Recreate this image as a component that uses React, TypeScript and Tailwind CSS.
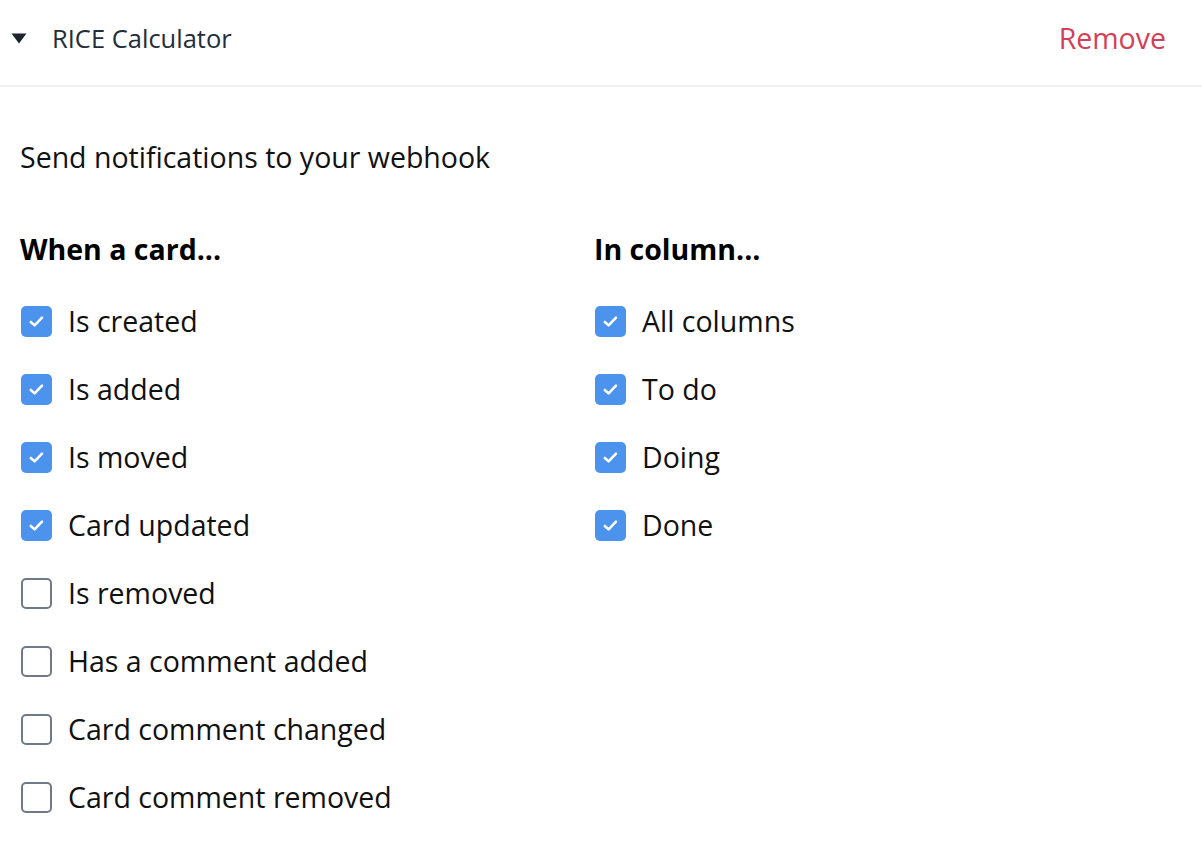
import React from "react";

const FONT = '"Open Sans", "Noto Sans", sans-serif';

function Box({ checked }: { checked: boolean }) {
  if (checked) {
    return (
      <span className="flex h-[31px] w-[31px] shrink-0 items-center justify-center rounded-[5px] bg-[#4b93ec]">
        <svg width="17" height="17" viewBox="0 0 17 17" fill="none">
          <path d="M2.8 9 L6.6 12.4 L14 4.6" stroke="white" strokeWidth="2.6" strokeLinecap="round" strokeLinejoin="round" />
        </svg>
      </span>
    );
  }
  return <span className="h-[31px] w-[31px] shrink-0 rounded-[5px] border-2 border-[#6f7a89] bg-white" />;
}

function Row({ label, checked }: { label: string; checked: boolean }) {
  return (
    <div className="flex h-[68px] items-center gap-[16px] pl-[1px]">
      <Box checked={checked} />
      <span className="text-[28.5px] leading-[40px] text-[#111]">{label}</span>
    </div>
  );
}

export default function App() {
  const left = ["Is created", "Is added", "Is moved", "Card updated", "Is removed", "Has a comment added", "Card comment changed", "Card comment removed"];
  const leftChecked = [true, true, true, true, false, false, false, false];
  const right = ["All columns", "To do", "Doing", "Done"];
  return (
    <div className="min-h-[862px] w-full bg-white" style={{ fontFamily: FONT }}>
      <div className="flex h-[87px] items-start justify-between border-b-2 border-[#f0f0f0] pl-[11px] pr-[36px] pt-[18px]">
        <div className="flex h-[40px] items-center gap-[25px]">
          <svg width="16" height="11" viewBox="0 0 16 11">
            <path d="M0.5 0.5 H15.5 L8 10.5 Z" fill="#1c2430" />
          </svg>
          <span className="text-[25.5px] leading-[40px] text-[#232d3b]">RICE Calculator</span>
        </div>
        <span className="text-[28.5px] leading-[40px] text-[#d33f55]">Remove</span>
      </div>
      <div className="pl-[20px]">
        <div className="pt-[50px] text-[28.5px] leading-[40px] text-[#111]">Send notifications to your webhook</div>
        <div className="mt-[52px] grid grid-cols-[574px_1fr]">
          <div>
            <div className="text-[28.5px] font-bold leading-[40px] text-black">When a card...</div>
            <div className="mt-[18px]">
              {left.map((l, i) => (
                <Row key={l} label={l} checked={leftChecked[i]} />
              ))}
            </div>
          </div>
          <div>
            <div className="text-[28.5px] font-bold leading-[40px] text-black">In column...</div>
            <div className="mt-[18px]">
              {right.map((l) => (
                <Row key={l} label={l} checked={true} />
              ))}
            </div>
          </div>
        </div>
      </div>
    </div>
  );
}
